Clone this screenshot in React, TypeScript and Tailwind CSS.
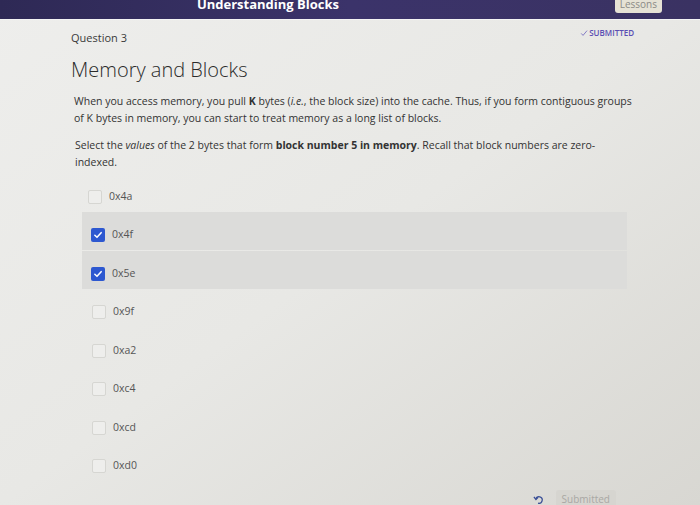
import React from "react";

const options = [
  { value: "0x4a", checked: false },
  { value: "0x4f", checked: true },
  { value: "0x5e", checked: true },
  { value: "0x9f", checked: false },
  { value: "0xa2", checked: false },
  { value: "0xc4", checked: false },
  { value: "0xcd", checked: false },
  { value: "0xd0", checked: false },
];

function Checkbox({ checked }: { checked: boolean }) {
  if (checked) {
    return (
      <span className="flex h-[14px] w-[14px] items-center justify-center rounded-[2px] bg-[#2d58d0]">
        <svg viewBox="0 0 12 12" className="h-[10px] w-[10px]" fill="none">
          <path d="M2.2 6.3 4.8 8.8 9.8 3.2" stroke="white" strokeWidth="1.8" strokeLinecap="round" strokeLinejoin="round" />
        </svg>
      </span>
    );
  }
  return <span className="h-[14px] w-[14px] rounded-[2px] border border-[#d6d6d2] bg-[#eeeeec]" />;
}

export default function App() {
  return (
    <div className="flex h-[505px] w-[700px] flex-col overflow-hidden bg-linear-to-br from-[#eeeeec] via-[#e8e8e5] to-[#d8d7d2] font-['Open_Sans',sans-serif]">
      {/* top bar */}
      <div className="relative flex h-[20px] shrink-0 items-center justify-center border-b border-[#f4f4f4] bg-linear-to-r from-[#2e2955] via-[#3b336a] to-[#3a3262]">
        <span className="ml-[-164px] mt-[-9px] text-[13px] font-bold text-white">Understanding Blocks</span>
        <span className="absolute right-[38px] top-[-4px] rounded-[3px] bg-[#e6e2d5] px-[5px] text-[10px] leading-[17px] text-[#8b8a86]">
          Lessons
        </span>
      </div>

      <div className="pl-[71px] pr-[66px]">
        <div className="flex items-start justify-between pt-[7px]">
          <span className="mt-[3px] text-[11px] text-[#3a3a3a]">Question 3</span>
          <span className="flex items-center gap-[1px] text-[8px] font-semibold text-[#5a4eb3]">
            <svg viewBox="0 0 10 10" className="h-[8px] w-[8px]" fill="none">
              <path d="M1.5 5.5 3.8 8 8.8 2" stroke="#6a60bc" strokeWidth="1" />
            </svg>
            SUBMITTED
          </span>
        </div>

        <h1 className="mt-[10px] text-[20px] font-light leading-[26px] text-[#2b2b2b]">Memory and Blocks</h1>

        <p className="mt-[10px] pl-[3px] pr-[2px] text-[10.5px] leading-[17px] text-[#333]">
          When you access memory, you pull <b>K</b> bytes (<i>i.e.</i>, the block size) into the cache. Thus, if you form contiguous groups
          of K bytes in memory, you can start to treat memory as a long list of blocks.
        </p>
        <p className="mt-[10px] pl-[4px] pr-[30px] text-[10.5px] leading-[17px] text-[#333]">
          Select the <i>values</i> of the 2 bytes that form <b>block number 5 in memory</b>. Recall that block numbers are zero-
          indexed.
        </p>

        <div className="mt-[6px] flex flex-col">
          {options.map((o, i) => (
            <div
              key={o.value}
              className={
                o.checked
                  ? "mb-[1px] ml-[11px] mr-[7px] flex h-[38px] items-center gap-[7px] bg-[#dcdcda] pl-[9px] pt-[9px]"
                  : i === 0
                    ? "flex h-[35px] items-center gap-[7px] pl-[17px] pt-[6px]"
                    : "flex h-[38.5px] items-center gap-[7px] pl-[21px] pt-[7px]"
              }
            >
              <Checkbox checked={o.checked} />
              <span className="text-[10.5px] text-[#555]">{o.value}</span>
            </div>
          ))}
        </div>

        <div className="mt-[8px] flex items-center justify-end gap-[12px] pr-[18px]">
          <svg viewBox="0 0 12 12" className="h-[11px] w-[11px]" fill="none">
            <path d="M3 5.5A3.6 3.6 0 1 1 5.5 10" stroke="#3a4f96" strokeWidth="1.4" />
            <path d="M1 3.2 3.2 6 5.6 3.6" stroke="#3a4f96" strokeWidth="1.4" />
          </svg>
          <span className="rounded-[3px] bg-[#d6d5d0] px-[6px] text-[10px] leading-[18px] text-[#a9a8a4]">Submitted</span>
        </div>
      </div>
    </div>
  );
}
